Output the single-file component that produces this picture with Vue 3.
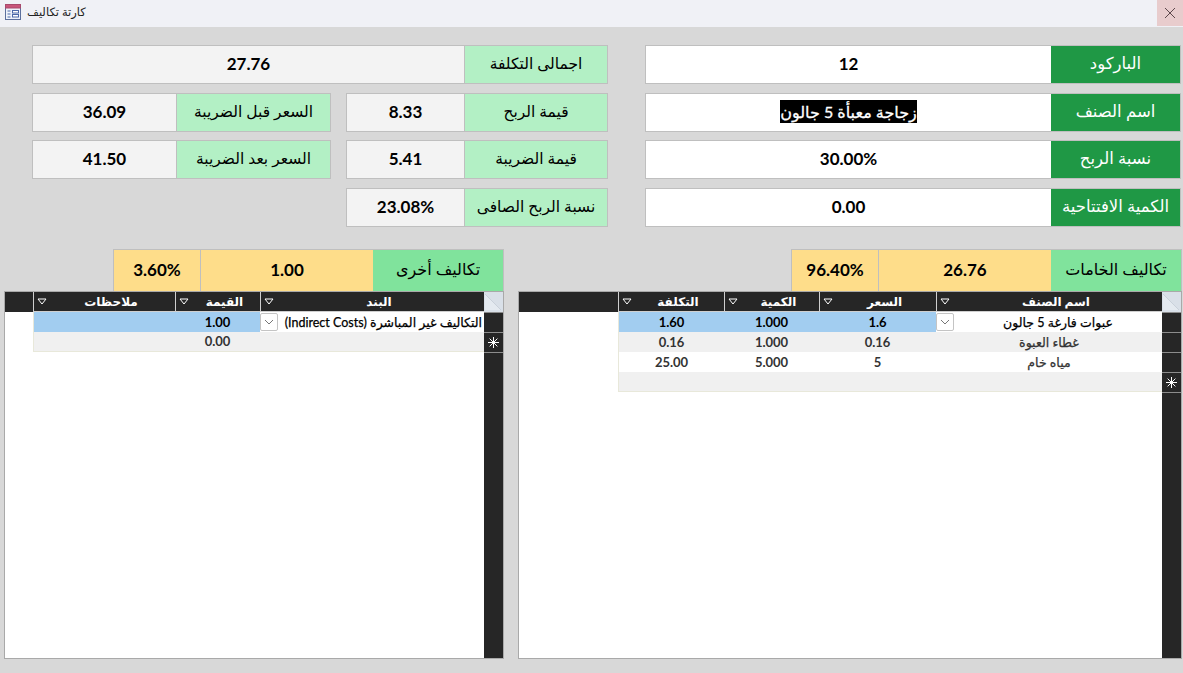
<script setup>
const topRows = [
  {
    left: [
      { v: '27.76', vc: 'v-full', l: 'اجمالى التكلفة', lc: 'l-b' }
    ],
    right: { v: '12', l: 'الباركود' }
  },
  {
    left: [
      { v: '36.09', vc: 'v-a', l: 'السعر قبل الضريبة', lc: 'l-a' },
      { v: '8.33', vc: 'v-b', l: 'قيمة الربح', lc: 'l-b' }
    ],
    right: { v: 'زجاجة معبأة 5 جالون', l: 'اسم الصنف', selected: true }
  },
  {
    left: [
      { v: '41.50', vc: 'v-a', l: 'السعر بعد الضريبة', lc: 'l-a' },
      { v: '5.41', vc: 'v-b', l: 'قيمة الضريبة', lc: 'l-b' }
    ],
    right: { v: '30.00%', l: 'نسبة الربح' }
  },
  {
    left: [
      { v: '23.08%', vc: 'v-b', l: 'نسبة الربح الصافى', lc: 'l-b' }
    ],
    right: { v: '0.00', l: 'الكمية الافتتاحية' }
  }
]

const panels = [
  {
    id: 'other',
    pct: '3.60%',
    value: '1.00',
    label: 'تكاليف أخرى',
    heads: ['ملاحظات', 'القيمة', 'البند'],
    rows: [
      { cells: ['', '1.00'], name: 'التكاليف غير المباشرة (Indirect Costs)', kind: 'sel' },
      { cells: ['', '0.00'], name: '', kind: 'new' }
    ]
  },
  {
    id: 'raw',
    pct: '96.40%',
    value: '26.76',
    label: 'تكاليف الخامات',
    heads: ['التكلفة', 'الكمية', 'السعر', 'اسم الصنف'],
    rows: [
      { cells: ['1.60', '1.000', '1.6'], name: 'عبوات فارغة 5 جالون', kind: 'sel' },
      { cells: ['0.16', '1.000', '0.16'], name: 'غطاء العبوة', kind: 'alt' },
      { cells: ['25.00', '5.000', '5'], name: 'مياه خام', kind: 'plain' },
      { cells: ['', '', ''], name: '', kind: 'new' }
    ]
  }
]
</script>

<template>
  <div class="window">
    <header class="titlebar">
      <svg class="app-icon" width="16" height="16" viewBox="0 0 16 16">
        <rect x="0.5" y="0.5" width="15" height="15" fill="#eef2fa" stroke="#5b6f9c" />
        <rect x="0.5" y="0.5" width="15" height="3.5" fill="#c8557a" stroke="#a84a6c" />
        <path d="M2.5 7h3M2.5 10h3M2.5 13h3" stroke="#4a68a8" fill="none" />
        <rect x="7.5" y="6.5" width="6" height="2.5" fill="#fff" stroke="#4a68a8" />
        <rect x="7.5" y="10.5" width="6" height="2.5" fill="#fff" stroke="#4a68a8" />
      </svg>
      <span class="title">كارتة تكاليف</span>
      <button class="close" aria-label="close">
        <svg width="12" height="12" viewBox="0 0 12 12">
          <path d="M1 1l10 10M11 1L1 11" stroke="#5c484c" stroke-width="1" fill="none" />
        </svg>
      </button>
    </header>

    <section class="form">
      <div v-for="(row, i) in topRows" :key="i" class="form-row">
        <div class="form-left">
          <div v-for="f in row.left" :key="f.l" class="pair">
            <div class="cell value soft" :class="f.vc">{{ f.v }}</div>
            <div class="cell label mint" :class="f.lc">{{ f.l }}</div>
          </div>
        </div>
        <div class="form-right">
          <div class="cell value white v-main">
            <span :class="{ selected: row.right.selected }">{{ row.right.v }}</span>
          </div>
          <div class="cell label green l-main">{{ row.right.l }}</div>
        </div>
      </div>
    </section>

    <section class="panels">
      <div v-for="p in panels" :key="p.id" class="panel" :class="'panel-' + p.id">
        <div class="summary">
          <div class="cell value yellow s-pct">{{ p.pct }}</div>
          <div class="cell value yellow s-val">{{ p.value }}</div>
          <div class="cell label bright s-label">{{ p.label }}</div>
        </div>
        <div class="grid">
          <div class="head blank"></div>
          <div v-for="h in p.heads" :key="h" class="head col">
            <svg class="sort" width="10" height="7" viewBox="0 0 10 7">
              <path d="M1 1h8L5 6z" fill="none" stroke="#fff" />
            </svg>
            <span class="head-text">{{ h }}</span>
          </div>
          <div class="head corner">
            <svg class="corner-mark" viewBox="0 0 19 20" preserveAspectRatio="none">
              <rect width="19" height="20" fill="#d9e0e8" />
              <path d="M1 2L17 18H1z" fill="#e4eaf0" />
              <path d="M1 2L17 18" stroke="#c9d1da" fill="none" />
            </svg>
          </div>

          <template v-for="(r, ri) in p.rows" :key="ri">
            <div class="empty"></div>
            <div
              v-for="(c, ci) in r.cells"
              :key="ci"
              class="data num"
              :class="[r.kind, { firstcol: ci === 0 }]"
            >{{ c }}</div>
            <div class="data name" :class="r.kind === 'sel' ? 'current' : r.kind">
              <button v-if="r.kind === 'sel'" class="drop" aria-label="open">
                <svg width="10" height="6" viewBox="0 0 10 6">
                  <path d="M1 1l4 4 4-4" fill="none" stroke="#777" />
                </svg>
              </button>
              <span>{{ r.name }}</span>
            </div>
            <div class="selector">
              <svg v-if="r.kind === 'new'" width="13" height="13" viewBox="0 0 13 13">
                <path d="M6.5 1v11M1 6.5h11M2.6 2.6l7.8 7.8M10.4 2.6l-7.8 7.8" stroke="#fff" fill="none" />
              </svg>
            </div>
          </template>

          <div class="fill"></div>
          <div class="selector rest"></div>
        </div>
      </div>
    </section>
  </div>
</template>

<style scoped>
.window {
  width: 1183px;
  height: 673px;
  display: flex;
  flex-direction: column;
  background: #d8d8d8;
  font-family: Lato, "DejaVu Sans", sans-serif;
  color: #000;
  overflow: hidden;
}

.titlebar {
  height: 27px;
  flex: none;
  display: flex;
  align-items: center;
  background: #f0f1f6;
  padding-left: 5px;
}
.app-icon { margin-bottom: 3px; }
.title {
  margin-left: 6px;
  font-size: 11.5px;
  color: #222;
  margin-bottom: 3px;
}
.close {
  margin-left: auto;
  width: 26px;
  height: 26px;
  margin-bottom: 1px;
  border: 0;
  padding: 0;
  background: #e8cccd;
  display: flex;
  align-items: center;
  justify-content: center;
}

.form {
  box-sizing: border-box;
  padding: 18px 2px 0 32px;
  height: 222px;
  flex: none;
  display: flex;
  flex-direction: column;
}
.form-row {
  display: flex;
  height: 39px;
  margin-bottom: 9px;
}
.form-row:nth-child(2) { margin-bottom: 8px; }
.form-left {
  width: 576px;
  display: flex;
  justify-content: flex-end;
  gap: 15px;
}
.form-right {
  margin-left: 37px;
  display: flex;
}
.pair { display: flex; }

.cell {
  box-sizing: border-box;
  height: 39px;
  display: flex;
  align-items: center;
  justify-content: center;
  border: 1px solid #bfbfbf;
  white-space: nowrap;
}
.value {
  font-size: 17px;
  font-weight: 700;
  padding-bottom: 2px;
}
.label {
  font-size: 15.5px;
  direction: rtl;
  padding-bottom: 3px;
}
.soft { background: #f3f3f3; }
.white { background: #fff; }
.mint { background: #b3f0c5; border-left: 0; }
.green { background: #1f9845; color: #fff; border-left: 0; font-size: 16.5px; }
.yellow { background: #fedd8a; }
.bright { background: #80e39c; border-left: 0; }

.v-full { width: 433px; }
.v-a { width: 145px; }
.l-a { width: 154px; }
.v-b { width: 119px; }
.l-b { width: 143px; }
.v-main { width: 406px; border-right: 0; }
.l-main { width: 130px; }

.selected {
  background: #000;
  color: #fff;
  line-height: 23px;
  display: block;
  direction: rtl;
  font-weight: 400;
  font-size: 16px;
  -webkit-text-stroke: 0.3px #fff;
}

.panels {
  flex: none;
  display: flex;
  gap: 14px;
  padding-left: 4px;
}
.panel {
  display: flex;
  flex-direction: column;
}
.panel-other { width: 500px; }
.panel-raw { width: 664px; }

.summary {
  display: flex;
  justify-content: flex-end;
  height: 42px;
}
.summary .cell { height: 43px; }
.s-pct { width: 87px; border-right: 0; }
.s-val { width: 173px; border-right: 0; }
.s-label { width: 131px; font-size: 16px; }

.grid {
  position: relative;
  box-sizing: border-box;
  height: 368px;
  display: grid;
  border: 1px solid #a9a9a9;
  background: #fff;
  font-size: 13px;
  font-weight: 700;
}
.panel-raw .grid {
  grid-template-columns: 99px 106px 95px 117px 226px 1fr;
  grid-template-rows: repeat(5, 20px) 1fr;
}
.panel-other .grid {
  grid-template-columns: 28px 142px 85px 224px 1fr;
  grid-template-rows: repeat(3, 20px) 1fr;
}

.head {
  background: #262626;
  color: #fff;
  box-sizing: border-box;
}
.col {
  display: flex;
  align-items: center;
  border-left: 1px solid #cfcfcf;
  border-bottom: 1px solid #cfcfcf;
  padding-left: 3px;
  direction: ltr;
  font-size: 12px;
}
.sort { flex: none; }
.head-text {
  flex: 1;
  text-align: center;
  direction: rtl;
}
.corner { display: flex; }
.corner-mark {
  display: block;
  width: 100%;
  height: 100%;
}

.empty { background: #fff; }

.data {
  box-sizing: border-box;
  display: flex;
  align-items: center;
  justify-content: center;
  white-space: nowrap;
  color: #333;
  font-weight: 700;
}
.num { padding-bottom: 1px; }
.sel { background: #a2cdf0; color: #000; }
.alt { background: #f0f0f0; }
.plain { background: #fff; }
.new {
  background: #f0f0f0;
  border-bottom: 1px solid #e8e8da;
}
.firstcol { border-left: 1px solid #e8e8da; }

.name {
  direction: rtl;
  position: relative;
  font-size: 12.5px;
  font-weight: 400;
  -webkit-text-stroke: 0.25px currentColor;
}
.current {
  background: #fff;
  color: #000;
  padding-left: 18px;
}
.panel-other .name {
  justify-content: flex-start;
  padding-right: 2px;
  padding-left: 0;
}
.drop {
  position: absolute;
  left: 0;
  top: 1px;
  box-sizing: border-box;
  width: 18px;
  height: 18px;
  padding: 0;
  border: 1px solid #c4c4c4;
  border-radius: 2px;
  background: #fff;
  display: flex;
  align-items: center;
  justify-content: center;
}

.selector {
  background: #262626;
  box-sizing: border-box;
  border-top: 1px solid #8c8c8c;
  display: flex;
  align-items: center;
  justify-content: center;
}
.rest { min-height: 0; }
.fill { grid-column: 1 / -2; background: #fff; }
</style>

<style>
html, body {
  margin: 0;
  overflow: hidden;
}
</style>
